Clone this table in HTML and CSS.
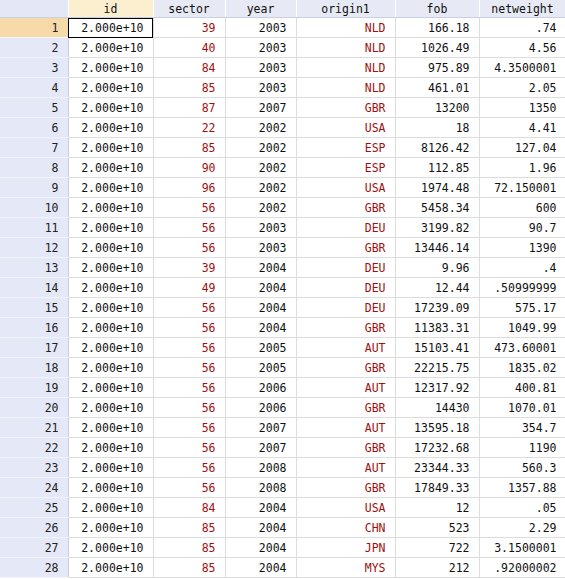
FILE: index.html
```html
<!DOCTYPE html>
<html>
<head>
<meta charset="utf-8">
<link rel="stylesheet" href="styles.css">
</head>
<body>
<table class="grid">
<colgroup>
<col class="c-rn"><col class="c-id"><col class="c-sec"><col class="c-yr"><col class="c-org"><col class="c-fob"><col class="c-nw">
</colgroup>
<thead>
<tr><th class="corner"></th><th class="sel">id</th><th>sector</th><th>year</th><th>origin1</th><th>fob</th><th>netweight</th></tr>
</thead>
<tbody>
<tr><td class="rn selrn">1</td><td class="cur">2.000e+10</td><td class="red">39</td><td>2003</td><td class="red">NLD</td><td>166.18</td><td>.74</td></tr>
<tr><td class="rn">2</td><td>2.000e+10</td><td class="red">40</td><td>2003</td><td class="red">NLD</td><td>1026.49</td><td>4.56</td></tr>
<tr><td class="rn">3</td><td>2.000e+10</td><td class="red">84</td><td>2003</td><td class="red">NLD</td><td>975.89</td><td>4.3500001</td></tr>
<tr><td class="rn">4</td><td>2.000e+10</td><td class="red">85</td><td>2003</td><td class="red">NLD</td><td>461.01</td><td>2.05</td></tr>
<tr><td class="rn">5</td><td>2.000e+10</td><td class="red">87</td><td>2007</td><td class="red">GBR</td><td>13200</td><td>1350</td></tr>
<tr><td class="rn">6</td><td>2.000e+10</td><td class="red">22</td><td>2002</td><td class="red">USA</td><td>18</td><td>4.41</td></tr>
<tr><td class="rn">7</td><td>2.000e+10</td><td class="red">85</td><td>2002</td><td class="red">ESP</td><td>8126.42</td><td>127.04</td></tr>
<tr><td class="rn">8</td><td>2.000e+10</td><td class="red">90</td><td>2002</td><td class="red">ESP</td><td>112.85</td><td>1.96</td></tr>
<tr><td class="rn">9</td><td>2.000e+10</td><td class="red">96</td><td>2002</td><td class="red">USA</td><td>1974.48</td><td>72.150001</td></tr>
<tr><td class="rn">10</td><td>2.000e+10</td><td class="red">56</td><td>2002</td><td class="red">GBR</td><td>5458.34</td><td>600</td></tr>
<tr><td class="rn">11</td><td>2.000e+10</td><td class="red">56</td><td>2003</td><td class="red">DEU</td><td>3199.82</td><td>90.7</td></tr>
<tr><td class="rn">12</td><td>2.000e+10</td><td class="red">56</td><td>2003</td><td class="red">GBR</td><td>13446.14</td><td>1390</td></tr>
<tr><td class="rn">13</td><td>2.000e+10</td><td class="red">39</td><td>2004</td><td class="red">DEU</td><td>9.96</td><td>.4</td></tr>
<tr><td class="rn">14</td><td>2.000e+10</td><td class="red">49</td><td>2004</td><td class="red">DEU</td><td>12.44</td><td>.50999999</td></tr>
<tr><td class="rn">15</td><td>2.000e+10</td><td class="red">56</td><td>2004</td><td class="red">DEU</td><td>17239.09</td><td>575.17</td></tr>
<tr><td class="rn">16</td><td>2.000e+10</td><td class="red">56</td><td>2004</td><td class="red">GBR</td><td>11383.31</td><td>1049.99</td></tr>
<tr><td class="rn">17</td><td>2.000e+10</td><td class="red">56</td><td>2005</td><td class="red">AUT</td><td>15103.41</td><td>473.60001</td></tr>
<tr><td class="rn">18</td><td>2.000e+10</td><td class="red">56</td><td>2005</td><td class="red">GBR</td><td>22215.75</td><td>1835.02</td></tr>
<tr><td class="rn">19</td><td>2.000e+10</td><td class="red">56</td><td>2006</td><td class="red">AUT</td><td>12317.92</td><td>400.81</td></tr>
<tr><td class="rn">20</td><td>2.000e+10</td><td class="red">56</td><td>2006</td><td class="red">GBR</td><td>14430</td><td>1070.01</td></tr>
<tr><td class="rn">21</td><td>2.000e+10</td><td class="red">56</td><td>2007</td><td class="red">AUT</td><td>13595.18</td><td>354.7</td></tr>
<tr><td class="rn">22</td><td>2.000e+10</td><td class="red">56</td><td>2007</td><td class="red">GBR</td><td>17232.68</td><td>1190</td></tr>
<tr><td class="rn">23</td><td>2.000e+10</td><td class="red">56</td><td>2008</td><td class="red">AUT</td><td>23344.33</td><td>560.3</td></tr>
<tr><td class="rn">24</td><td>2.000e+10</td><td class="red">56</td><td>2008</td><td class="red">GBR</td><td>17849.33</td><td>1357.88</td></tr>
<tr><td class="rn">25</td><td>2.000e+10</td><td class="red">84</td><td>2004</td><td class="red">USA</td><td>12</td><td>.05</td></tr>
<tr><td class="rn">26</td><td>2.000e+10</td><td class="red">85</td><td>2004</td><td class="red">CHN</td><td>523</td><td>2.29</td></tr>
<tr><td class="rn">27</td><td>2.000e+10</td><td class="red">85</td><td>2004</td><td class="red">JPN</td><td>722</td><td>3.1500001</td></tr>
<tr><td class="rn">28</td><td>2.000e+10</td><td class="red">85</td><td>2004</td><td class="red">MYS</td><td>212</td><td>.92000002</td></tr>
</tbody>
</table>
</body>
</html>
```
FILE: styles.css
```css
html, body {
  margin: 0;
  padding: 0;
  background: #ffffff;
}
.grid {
  border-collapse: collapse;
  table-layout: fixed;
  width: 566px;
  font-family: "DejaVu Sans Mono", "Liberation Mono", monospace;
  font-size: 11.5px;
  color: #111111;
}
.c-rn { width: 68px; }
.c-id { width: 85px; }
.c-sec { width: 72px; }
.c-yr { width: 71px; }
.c-org { width: 99px; }
.c-fob { width: 84px; }
.c-nw { width: 87px; }
.grid th {
  height: 17px;
  padding: 0;
  font-weight: normal;
  text-align: center;
  background: #e7eaf5;
  border-right: 1px solid #ffffff;
  border-bottom: 1px solid #c9cfe0;
  color: #111111;
}
.grid th.corner {
  background: #e4e8f6;
}
.grid th.sel {
  background: #fcefcf;
}
.grid td {
  height: 19px;
  padding: 0 9px 0 0;
  text-align: right;
  white-space: nowrap;
  overflow: hidden;
  border-right: 1px solid #dcdcdc;
  border-bottom: 1px solid #dcdcdc;
}
.grid td.rn {
  background: #e4e8f7;
  border-bottom: 1px solid #f2f4fb;
  border-right: 1px solid #c9cfe0;
  color: #222222;
}
.grid td.selrn {
  background: #f6daa9;
}
.grid td.cur {
  outline: 1px solid #000000;
  outline-offset: -1px;
}
.grid td.red {
  color: #a01010;
}
```
